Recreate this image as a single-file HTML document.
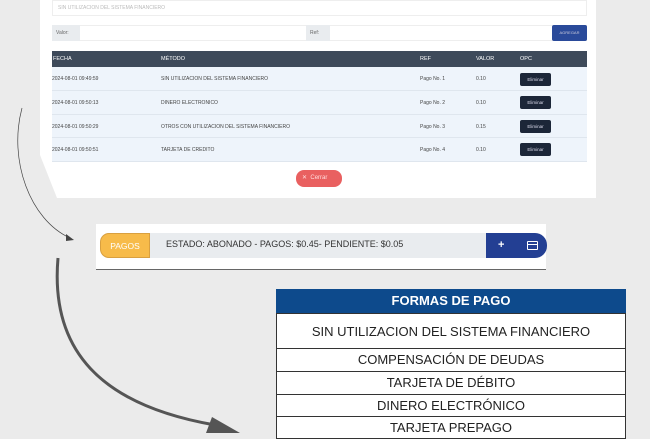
<!DOCTYPE html>
<html><head><meta charset="utf-8"><style>
*{margin:0;padding:0;box-sizing:border-box}
body{width:650px;height:433px;overflow:hidden;background:#ebebeb;font-family:"Liberation Sans",sans-serif;position:relative}
.a{position:absolute}
.s{font-size:5px;color:#444;white-space:nowrap}
.h{font-size:5.5px;color:#fff}
.row{position:absolute;left:52px;width:535px;background:#eef4fb;border-bottom:1px solid #dfe6ee}
.el{position:absolute;left:520px;width:31px;height:13px;background:#1c2638;border-radius:2px;color:#dde;font-size:4.5px;text-align:center;line-height:13px}
.fp{position:absolute;left:276px;width:350px;border:1px solid #333;border-top:none;background:#fff;text-align:center;font-size:13px;color:#222}
</style></head><body>
<svg class="a" style="left:0;top:0" width="650" height="433">
<polygon points="40,0 596,0 596,198 57,198 40,155" fill="#fff"/>
<path d="M22,108 C8,160 30,220 70,238" fill="none" stroke="#444" stroke-width="0.7"/>
<polygon points="66,234 74,240 66,241" fill="#444"/>
<path d="M58,258 C50,350 100,405 215,425" fill="none" stroke="#555" stroke-width="3"/>
<polygon points="212,417 240,433 206,433" fill="#555"/>
</svg>
<div class="a" style="left:52px;top:0;width:535px;height:16px;border:1px solid #eee;background:#fff"></div>
<div class="a s" style="left:58px;top:5px;color:#bbb">SIN UTILIZACION DEL SISTEMA FINANCIERO</div>
<div class="a" style="left:52px;top:25px;width:535px;height:16px;border:1px solid #eee;background:#fff"></div>
<div class="a" style="left:52px;top:25px;width:28px;height:16px;background:#e9ecef"></div>
<div class="a s" style="left:56px;top:30px;color:#666">Valor:</div>
<div class="a" style="left:306px;top:25px;width:24px;height:16px;background:#e9ecef"></div>
<div class="a s" style="left:310px;top:30px;color:#666">Ref:</div>
<div class="a" style="left:552px;top:25px;width:35px;height:16px;background:#2a4a9a;border-radius:2px;color:#ccd;font-size:4px;text-align:center;line-height:16px">AGREGAR</div>
<div class="a" style="left:52px;top:51px;width:535px;height:16px;background:#3e4a5a"></div>
<div class="a s h" style="left:53px;top:56px">FECHA</div>
<div class="a s h" style="left:161px;top:56px">MÉTODO</div>
<div class="a s h" style="left:420px;top:56px">REF</div>
<div class="a s h" style="left:476px;top:56px">VALOR</div>
<div class="a s h" style="left:520px;top:56px">OPC</div>
<div class="row" style="top:67px;height:24px"></div>
<div class="row" style="top:91px;height:24px"></div>
<div class="row" style="top:115px;height:23px"></div>
<div class="row" style="top:138px;height:24px"></div>
<div class="a s" style="left:52px;top:76px">2024-08-01 09:49:59</div><div class="a s" style="left:161px;top:76px">SIN UTILIZACION DEL SISTEMA FINANCIERO</div><div class="a s" style="left:420px;top:76px">Pago No. 1</div><div class="a s" style="left:476px;top:76px">0.10</div><div class="el" style="top:73px">Eliminar</div>
<div class="a s" style="left:52px;top:100px">2024-08-01 09:50:13</div><div class="a s" style="left:161px;top:100px">DINERO ELECTRONICO</div><div class="a s" style="left:420px;top:100px">Pago No. 2</div><div class="a s" style="left:476px;top:100px">0.10</div><div class="el" style="top:96px">Eliminar</div>
<div class="a s" style="left:52px;top:124px">2024-08-01 09:50:29</div><div class="a s" style="left:161px;top:124px">OTROS CON UTILIZACION DEL SISTEMA FINANCIERO</div><div class="a s" style="left:420px;top:124px">Pago No. 3</div><div class="a s" style="left:476px;top:124px">0.15</div><div class="el" style="top:120px">Eliminar</div>
<div class="a s" style="left:52px;top:147px">2024-08-01 09:50:51</div><div class="a s" style="left:161px;top:147px">TARJETA DE CREDITO</div><div class="a s" style="left:420px;top:147px">Pago No. 4</div><div class="a s" style="left:476px;top:147px">0.10</div><div class="el" style="top:143px">Eliminar</div>
<div class="a" style="left:296px;top:170px;width:46px;height:17px;background:#e96060;border-radius:8px;color:#fdd;font-size:6px;line-height:17px;padding-left:6px">✕ &nbsp;Cerrar</div>
<div class="a" style="left:96px;top:224px;width:450px;height:46px;background:#fff;border-bottom:1.5px solid #666"></div>
<div class="a" style="left:100px;top:233px;width:447px;height:25px;background:#e9ecef;border-radius:9px 12px 12px 9px"></div>
<div class="a" style="left:100px;top:233px;width:50px;height:25px;background:#f7bb4a;border:1px solid #d9a040;border-radius:9px 0 0 9px;color:#fff;font-size:8.5px;text-align:center;line-height:24px">PAGOS</div>
<div class="a" style="left:166px;top:239px;font-size:9px;color:#333;white-space:nowrap">ESTADO: ABONADO - PAGOS: $0.45- PENDIENTE: $0.05</div>
<div class="a" style="left:486px;top:233px;width:61px;height:25px;background:#233f93;border-radius:0 12px 12px 0"></div>
<div class="a" style="left:498px;top:240px;color:#fff;font-size:11px;font-weight:bold;line-height:11px">+</div>
<div class="a" style="left:527px;top:241px;width:11px;height:9px;border:1.5px solid #fff;border-radius:1px"><div style="margin-top:1.5px;height:1.5px;background:#fff"></div></div>
<div class="a" style="left:276px;top:289px;width:350px;height:24px;background:#0d4a8c;color:#fff;font-weight:bold;font-size:13px;text-align:center;line-height:24px">FORMAS DE PAGO</div>
<div class="fp" style="top:313px;height:36px;line-height:35px;border-top:1px solid #333">SIN UTILIZACION DEL SISTEMA FINANCIERO</div>
<div class="fp" style="top:349px;height:23px;line-height:22px">COMPENSACIÓN DE DEUDAS</div>
<div class="fp" style="top:372px;height:23px;line-height:22px">TARJETA DE DÉBITO</div>
<div class="fp" style="top:395px;height:22px;line-height:21px">DINERO ELECTRÓNICO</div>
<div class="fp" style="top:417px;height:22px;line-height:22px">TARJETA PREPAGO</div>
</body></html>
